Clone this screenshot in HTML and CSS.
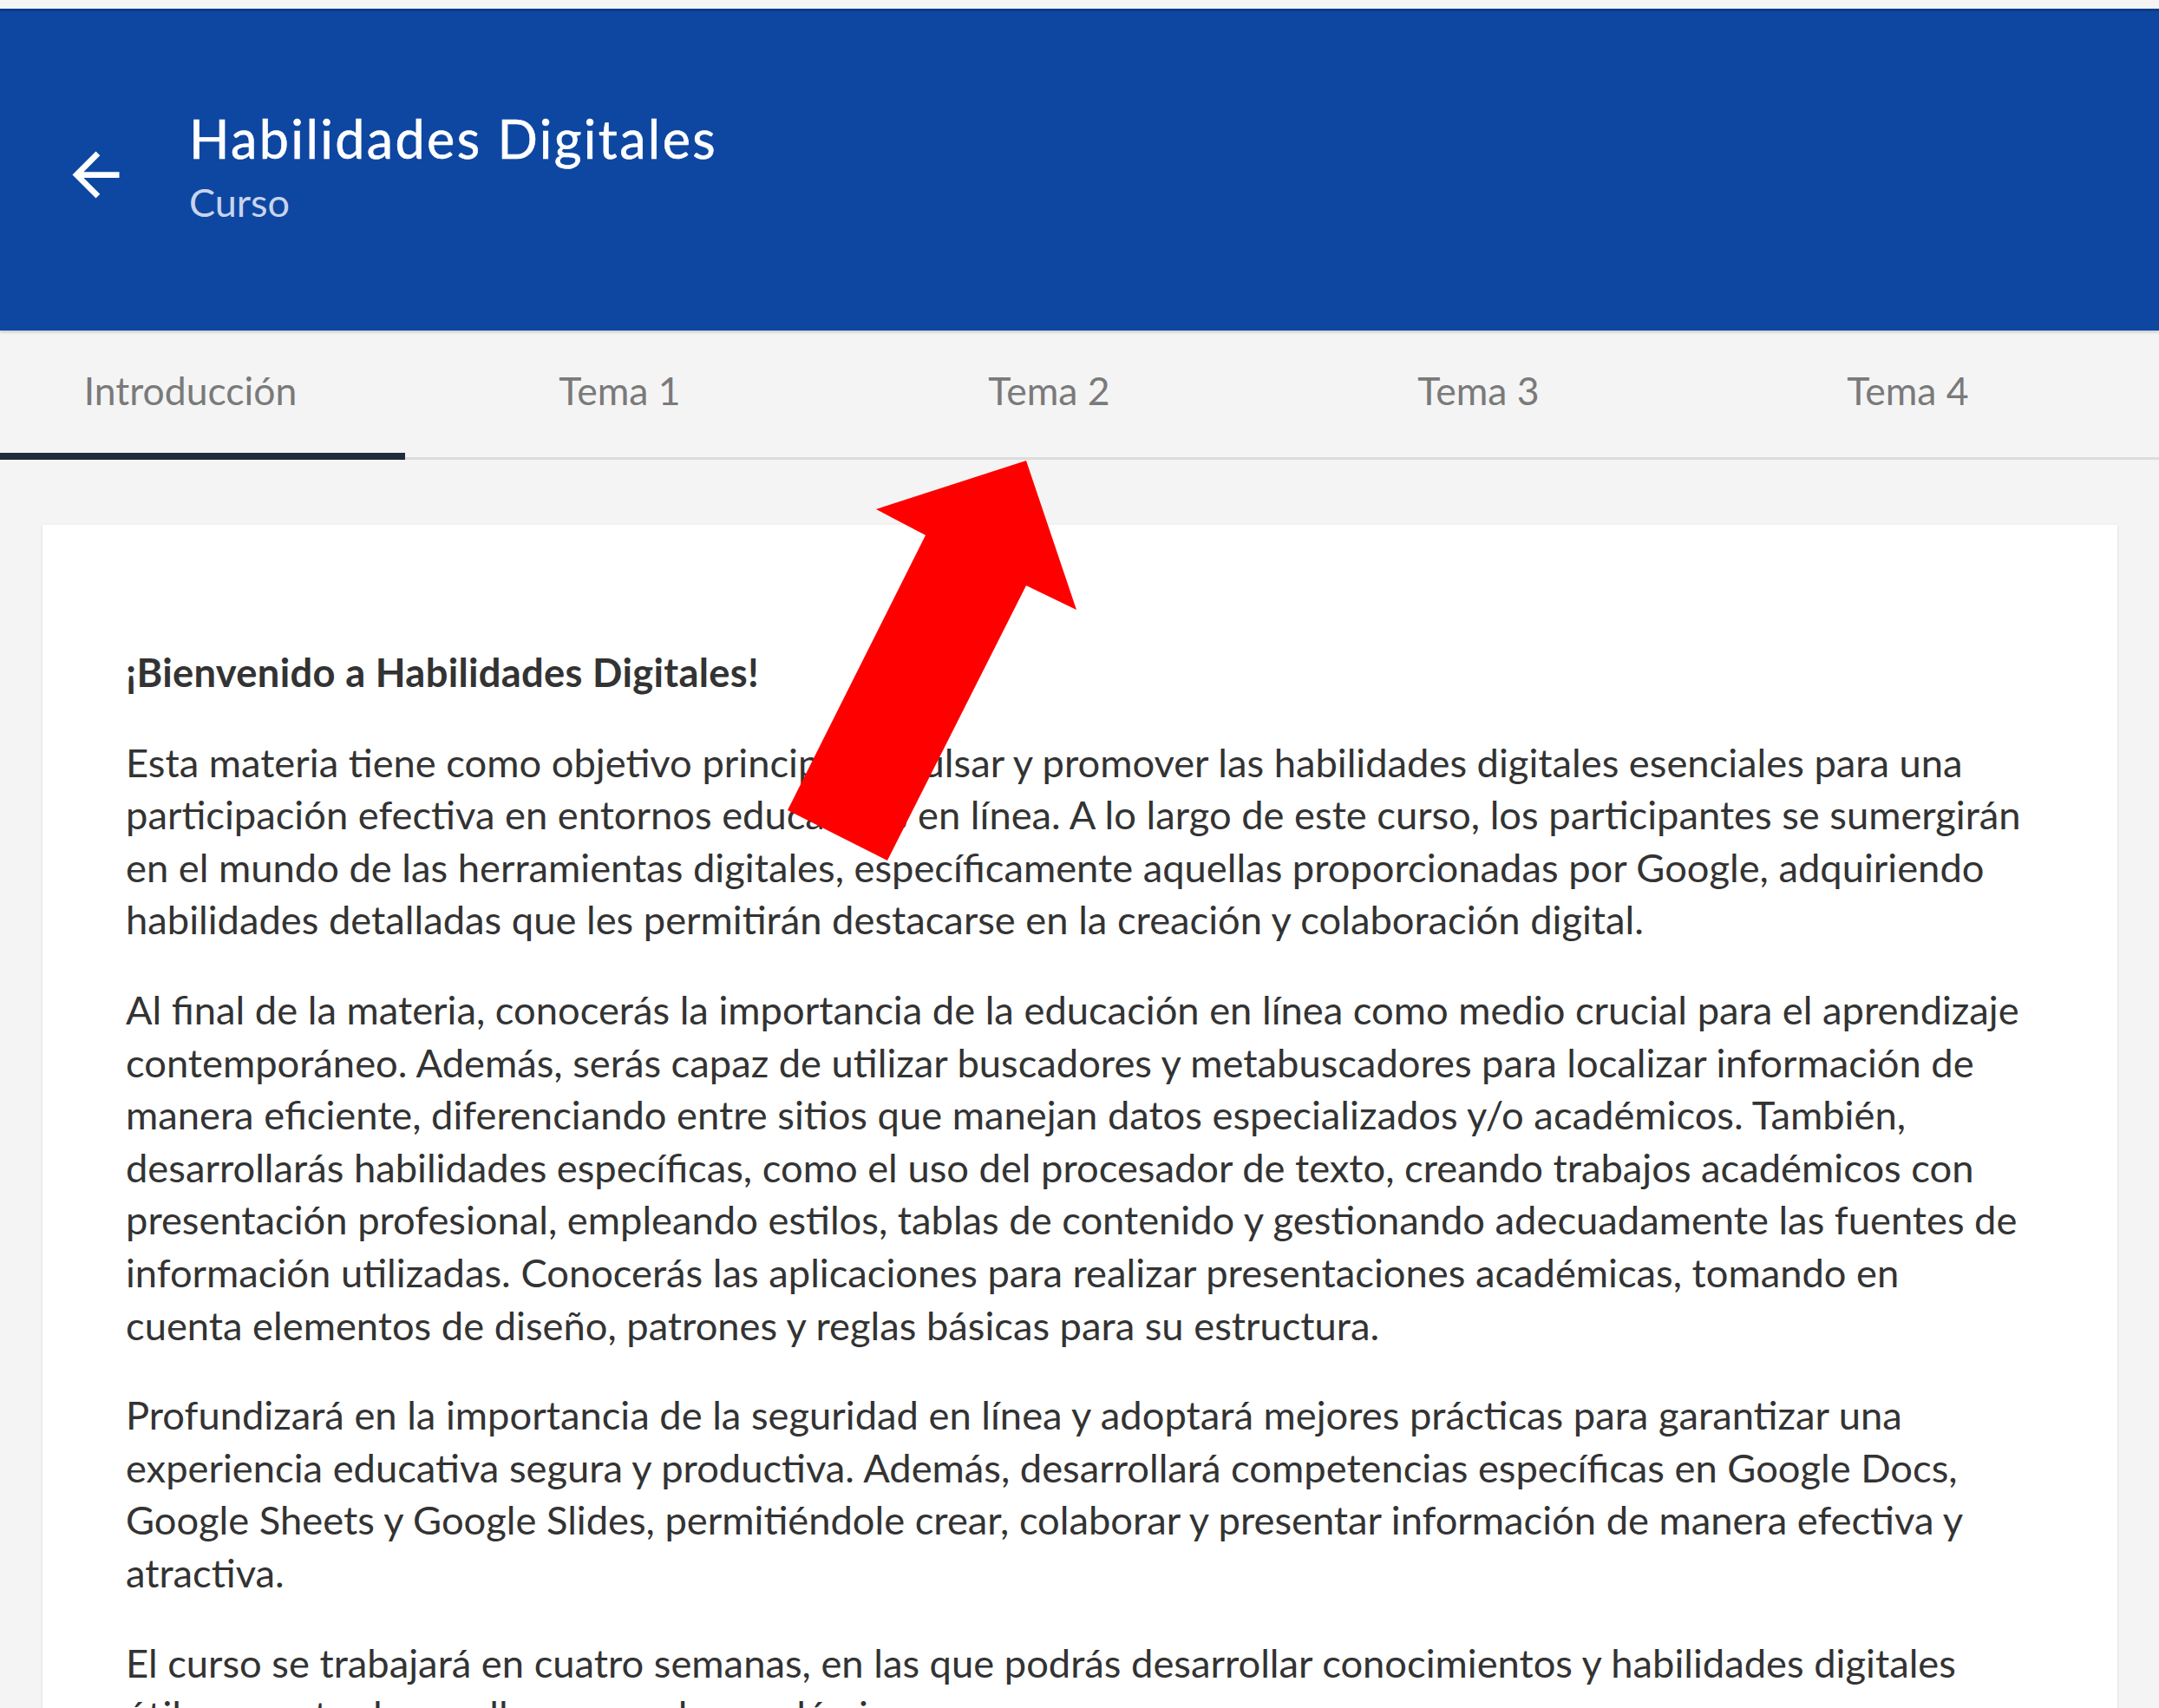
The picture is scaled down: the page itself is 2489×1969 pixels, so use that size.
FILE: index.html
```html
<!DOCTYPE html>
<html lang="es">
<head>
<meta charset="utf-8">
<title>Habilidades Digitales</title>
<link rel="stylesheet" href="styles.css">
</head>
<body>
<div class="page">
  <header class="appbar">
    <button class="back" aria-label="Volver">
      <svg viewBox="0 0 24 24"><path d="M20 11H7.83l5.59-5.59L12 4l-8 8 8 8 1.41-1.41L7.83 13H20v-2z"/></svg>
    </button>
    <div class="titles">
      <h1 class="title">Habilidades Digitales</h1>
      <div class="subtitle">Curso</div>
    </div>
  </header>

  <nav class="tabs-wrap">
    <div class="tabs">
      <a class="tab active">Introducción</a>
      <a class="tab">Tema 1</a>
      <a class="tab">Tema 2</a>
      <a class="tab">Tema 3</a>
      <a class="tab">Tema 4</a>
    </div>
  </nav>

  <main class="content">
    <article class="card">
      <p class="lead">¡Bienvenido a Habilidades Digitales!</p>
      <p>Esta materia tiene como objetivo principal impulsar y promover las habilidades digitales esenciales para una<br>participación efectiva en entornos educativos en línea. A lo largo de este curso, los participantes se sumergirán<br>en el mundo de las herramientas digitales, específicamente aquellas proporcionadas por Google, adquiriendo<br>habilidades detalladas que les permitirán destacarse en la creación y colaboración digital.</p>
      <p>Al final de la materia, conocerás la importancia de la educación en línea como medio crucial para el aprendizaje<br>contemporáneo. Además, serás capaz de utilizar buscadores y metabuscadores para localizar información de<br>manera eficiente, diferenciando entre sitios que manejan datos especializados y/o académicos. También,<br>desarrollarás habilidades específicas, como el uso del procesador de texto, creando trabajos académicos con<br>presentación profesional, empleando estilos, tablas de contenido y gestionando adecuadamente las fuentes de<br>información utilizadas. Conocerás las aplicaciones para realizar presentaciones académicas, tomando en<br>cuenta elementos de diseño, patrones y reglas básicas para su estructura.</p>
      <p>Profundizará en la importancia de la seguridad en línea y adoptará mejores prácticas para garantizar una<br>experiencia educativa segura y productiva. Además, desarrollará competencias específicas en Google Docs,<br>Google Sheets y Google Slides, permitiéndole crear, colaborar y presentar información de manera efectiva y<br>atractiva.</p>
      <p>El curso se trabajará en cuatro semanas, en las que podrás desarrollar conocimientos y habilidades digitales<br>útiles para tu desarrollo personal y académico.</p>
    </article>
  </main>

  <svg class="annotation" viewBox="0 0 2489 1969" aria-hidden="true">
    <polygon points="1183,531 1241,703 1183,675 1023,992 908,934 1067,617 1010,587" fill="#ff0000"/>
  </svg>
</div>
</body>
</html>
```
FILE: styles.css
```css
html, body {
  margin: 0;
  padding: 0;
}

body {
  background: #f4f4f4;
  font-family: "Lato", "Open Sans", sans-serif;
}

.page {
  position: relative;
  padding-top: 10px;
  min-height: 1969px;
  overflow: hidden;
}

/* App bar */
.appbar {
  height: 371px;
  box-sizing: border-box;
  background: #0d47a1;
  border-top: 3px solid #0a3c8c;
  display: flex;
  align-items: flex-start;
  padding: 108px 0 0 70px;
  box-shadow: 0 2px 3px rgba(0, 0, 0, 0.18);
  position: relative;
  z-index: 1;
}

.back {
  width: 81px;
  height: 81px;
  margin-top: 40px;
  padding: 0;
  border: 0;
  background: none;
  flex: none;
}

.back svg {
  display: block;
  width: 81px;
  height: 81px;
  fill: #ffffff;
}

.titles {
  margin-left: 67px;
}

.title {
  margin: 0;
  font-size: 61px;
  line-height: 78px;
  font-weight: 400;
  letter-spacing: 2.4px;
  color: #ffffff;
  -webkit-text-stroke: 0.6px #ffffff;
}

.subtitle {
  font-size: 45px;
  line-height: 68px;
  color: #c9d3ee;
}

/* Tabs */
.tabs-wrap {
  overflow: hidden;
  background: #f4f4f4;
  box-shadow: inset 0 -3px 0 #dcdcdc;
}

.tabs {
  display: flex;
  margin-left: -28px;
}

.tab {
  flex: 0 0 495px;
  height: 149px;
  box-sizing: border-box;
  padding-bottom: 12px;
  display: flex;
  align-items: center;
  justify-content: center;
  font-size: 44.5px;
  color: #7a7a7a;
  text-decoration: none;
}

.tab.active {
  box-shadow: inset 0 -8px 0 #1e2b3c;
}

/* Content */
.content {
  padding: 75px 48px 0 49px;
}

.card {
  background: #ffffff;
  padding: 140px 70px 240px 96px;
  box-shadow: 0 1px 3px rgba(0, 0, 0, 0.12);
}

.card p {
  margin: 0 0 43px;
  font-size: 45.3px;
  line-height: 60.6px;
  color: #333333;
}

.card .lead {
  font-weight: 700;
  letter-spacing: 0.3px;
}

/* Annotation overlay */
.annotation {
  position: absolute;
  top: 0;
  left: 0;
  width: 2489px;
  height: 1969px;
  pointer-events: none;
  z-index: 2;
}
```
